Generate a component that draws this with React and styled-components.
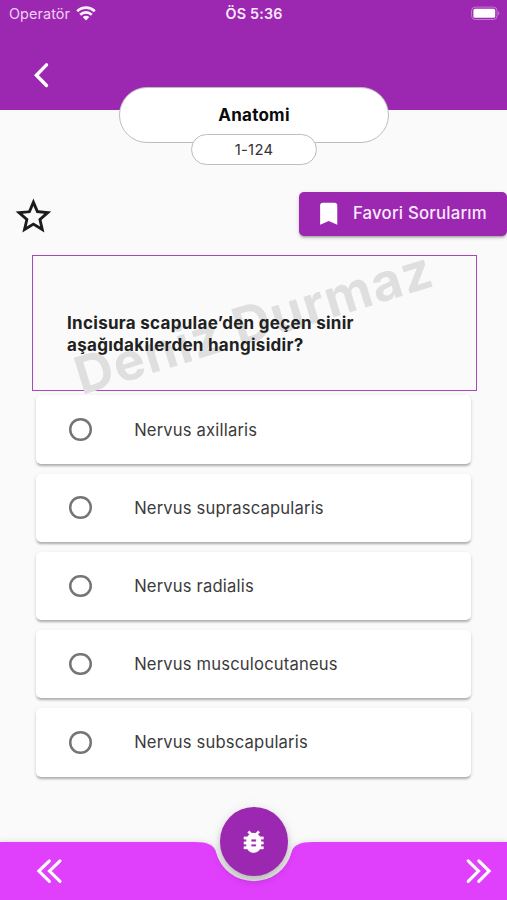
import React from "react";
import styled, { createGlobalStyle } from "styled-components";

const GlobalStyle = createGlobalStyle`
  * { box-sizing: border-box; }
  html, body { margin: 0; padding: 0; }
  body { background: #fafafa; font-family: Inter, "Liberation Sans", sans-serif; overflow: hidden; }
`;

const Screen = styled.div`
  display: flex;
  flex-direction: column;
  width: 507px;
  height: 900px;
  overflow: hidden;
  background: #fafafa;
`;

const Header = styled.header`
  flex: none;
  height: 110.3px;
  background: #9c27b0;
`;

const StatusBar = styled.div`
  display: grid;
  grid-template-columns: 1fr auto 1fr;
  align-items: center;
  height: 27px;
  padding: 0 7px 0 9px;
  color: #fbe9fd;
`;

const Carrier = styled.div`
  display: flex;
  align-items: center;
  gap: 6px;
  font-size: 14.4px;
  letter-spacing: 0.1px;
  color: #efcff4;
`;

const Clock = styled.div`
  margin-right: 1px;
  font-size: 14.3px;
  font-weight: 600;
  letter-spacing: 0.2px;
`;

const BatterySlot = styled.div`
  display: flex;
  justify-content: flex-end;
`;

const BackButton = styled.button`
  display: block;
  margin: 33px 0 0 26px;
  padding: 0;
  width: 30px;
  height: 30px;
  border: 0;
  background: none;
  svg { display: block; }
`;

const Heading = styled.div`
  display: flex;
  flex: none;
  flex-direction: column;
  align-items: center;
  margin-top: -23.3px;
  padding-left: 1px;
  z-index: 1;
`;

const Pill = styled.div`
  display: flex;
  align-items: center;
  justify-content: center;
  background: #fff;
  border: 1.2px solid #bdbdbd;
`;

const TitlePill = styled(Pill)`
  width: 270px;
  height: 56px;
  border-radius: 28px;
  font-size: 17px;
  font-weight: 700;
  letter-spacing: 0.25px;
  color: #0a0a0a;
`;

const CountPill = styled(Pill)`
  width: 126px;
  height: 31px;
  margin-top: -9px;
  border-radius: 15.5px;
  font-size: 14.8px;
  letter-spacing: 0.3px;
  color: #333;
`;

const Actions = styled.div`
  display: flex;
  flex: none;
  justify-content: space-between;
  height: 44.5px;
  margin-top: 26.5px;
  padding-left: 11.5px;
`;

const StarButton = styled.button`
  padding: 3px 0 0;
  border: 0;
  background: none;
  svg { display: block; }
`;

const FavoritesButton = styled.button`
  display: flex;
  align-items: center;
  gap: 10px;
  width: 208px;
  padding: 0 0 1px 14.5px;
  border: 0;
  border-radius: 5px;
  background: #9c27b0;
  color: #fcebfe;
  font-family: inherit;
  font-size: 16.8px;
  font-weight: 500;
  letter-spacing: 0.2px;
  white-space: nowrap;
  box-shadow: 0 3px 2px -2px rgba(0, 0, 0, 0.2), 0 2px 3px rgba(0, 0, 0, 0.14), 0 1px 5px rgba(0, 0, 0, 0.1);
`;

const QuestionBox = styled.section`
  position: relative;
  display: flex;
  flex: none;
  align-items: center;
  width: 445px;
  height: 136px;
  margin: 19px 0 0 31.5px;
  padding: 21px 35px 0 34.5px;
  border: 1.3px solid #ab47bc;
`;

const Watermark = styled.span`
  position: absolute;
  top: 50%;
  left: 50%;
  transform: translate(-50%, -50%) rotate(-17.19deg);
  font-size: 52px;
  line-height: 1;
  font-weight: 700;
  letter-spacing: 1.3px;
  color: #dfdfdf;
  white-space: nowrap;
`;

const QuestionText = styled.p`
  position: relative;
  margin: 0;
  font-size: 17px;
  line-height: 22px;
  font-weight: 700;
  letter-spacing: 0.29px;
  color: #212121;
  white-space: pre-line;
`;

const Options = styled.div`
  position: relative;
  display: flex;
  flex: none;
  flex-direction: column;
  gap: 9.8px;
  margin: 4.4px 35.7px 0 36.3px;
`;

const OptionCard = styled.label`
  display: flex;
  align-items: center;
  height: 68.4px;
  padding-left: 32.7px;
  border-radius: 5px;
  background: #fff;
  color: #3c3c3c;
  font-size: 16.6px;
  letter-spacing: 0.17px;
  box-shadow: 0 2.5px 2px -1px rgba(0, 0, 0, 0.17), 0 2px 3px rgba(0, 0, 0, 0.12), 0 1px 4px rgba(0, 0, 0, 0.07);
`;

const Radio = styled.span`
  width: 22.6px;
  height: 22.6px;
  margin-right: 42.6px;
  border-radius: 50%;
  box-shadow: inset 0 0 0 2.5px #757575;
`;

const BottomBar = styled.nav`
  position: relative;
  flex: none;
  height: 58.5px;
  margin-top: auto;
`;

const BarShape = styled.svg`
  position: absolute;
  inset: 0;
  display: block;
  overflow: visible;
  filter: drop-shadow(0 0 3px rgba(0, 0, 0, 0.12));
`;

const BarItems = styled.div`
  position: relative;
  display: flex;
  justify-content: space-between;
  height: 100%;
  padding: 14px 14px 0 34px;
`;

const BarButton = styled.button`
  padding: 0;
  width: 30px;
  height: 30px;
  border: 0;
  background: none;
  svg { display: block; }
`;

const BugButton = styled.button`
  position: absolute;
  left: 219.5px;
  top: -34.5px;
  display: flex;
  align-items: center;
  justify-content: center;
  width: 68.6px;
  height: 68.6px;
  padding: 0;
  border: 0;
  border-radius: 50%;
  background: #9c27b0;
  box-shadow: 0 4px 6px -1px rgba(0, 0, 0, 0.16), 0 5px 10px rgba(0, 0, 0, 0.1), 0 1px 14px rgba(0, 0, 0, 0.07);
`;

const WifiIcon = () => (
  <svg width="20" height="15" viewBox="0 0 20 15">
    <g fill="none" stroke="#fdf0fe" strokeWidth="2.7">
      <path d="M1.2 5.2C6.2.5 13.8.5 18.8 5.2" />
      <path d="M4.2 8.7C7.6 5.5 12.4 5.5 15.8 8.7" />
    </g>
    <path fill="#fdf0fe" d="M6.7 11.1c1.9-1.7 4.7-1.7 6.6 0L10 14.4z" />
  </svg>
);

const BatteryIcon = () => (
  <svg width="30" height="15" viewBox="0 0 30 15">
    <rect x="1.6" y="1.1" width="25.4" height="12.4" rx="3.6" fill="none" stroke="#c47bd0" />
    <rect x="3.4" y="2.8" width="21.8" height="9" rx="1.6" fill="#fff" />
    <path d="M28.2 5.2c1.5.6 1.5 3.6 0 4.2z" fill="#c47bd0" />
  </svg>
);

const BackIcon = () => (
  <svg width="30" height="30" viewBox="0 0 30 30" fill="none" stroke="#fff" strokeWidth="3.4" strokeLinecap="round">
    <path d="M20.5 4.9 10.4 15.2 20.5 25.5" />
  </svg>
);

const StarIcon = () => (
  <svg width="42.8" height="42.8" viewBox="0 0 24 24" fill="#1c1c1c">
    <path d="M22 9.24l-7.19-.62L12 2 9.19 8.63 2 9.24l5.46 4.73L5.82 21 12 17.27 18.18 21l-1.63-7.03L22 9.24zM12 15.4l-3.76 2.27 1-4.28-3.32-2.88 4.38-.38L12 6.1l1.71 4.04 4.38.38-3.32 2.88 1 4.28L12 15.4z" />
  </svg>
);

const BookmarkIcon = () => (
  <svg width="29.4" height="29.4" viewBox="0 0 24 24" fill="#fff">
    <path d="M17 3H7c-1.1 0-2 .9-2 2v16l7-3 7 3V5c0-1.1-.9-2-2-2z" />
  </svg>
);

const BugIcon = () => (
  <svg width="29.4" height="29.4" viewBox="0 0 24 24" fill="#fff" stroke="#fff" strokeWidth="0.25">
    <path d="M20 8h-2.81c-.45-.78-1.07-1.45-1.82-1.96L17 4.41 15.59 3l-2.17 2.17C12.96 5.06 12.49 5 12 5c-.49 0-.96.06-1.41.17L8.41 3 7 4.41l1.62 1.63C7.88 6.55 7.26 7.22 6.81 8H4v2h2.09c-.05.33-.09.66-.09 1v1H4v2h2v1c0 .34.04.67.09 1H4v2h2.81c1.04 1.79 2.97 3 5.19 3s4.15-1.21 5.19-3H20v-2h-2.09c.05-.33.09-.66.09-1v-1h2v-2h-2v-1c0-.34-.04-.67-.09-1H20V8zm-6 8h-4v-2h4v2zm0-4h-4v-2h4v2z" />
  </svg>
);

const DoubleLeftIcon = () => (
  <svg width="30" height="30" viewBox="0 0 30 30" fill="none" stroke="#fff" strokeWidth="3.1" strokeLinecap="round">
    <path d="M15.4 4.9 4.9 15.1 15.4 25.3M26 4.9 15.5 15.1 26 25.3" />
  </svg>
);

const DoubleRightIcon = () => (
  <svg width="30" height="30" viewBox="0 0 30 30" fill="none" stroke="#fff" strokeWidth="3.1" strokeLinecap="round">
    <path d="M5.2 4.9 15.5 15.1 5.2 25.3M15.8 4.9 26.1 15.1 15.8 25.3" />
  </svg>
);

const options = [
  "Nervus axillaris",
  "Nervus suprascapularis",
  "Nervus radialis",
  "Nervus musculocutaneus",
  "Nervus subscapularis",
];

export default function App() {
  return (
    <Screen>
      <GlobalStyle />
      <Header>
        <StatusBar>
          <Carrier>
            Operatör
            <WifiIcon />
          </Carrier>
          <Clock>ÖS 5:36</Clock>
          <BatterySlot>
            <BatteryIcon />
          </BatterySlot>
        </StatusBar>
        <BackButton aria-label="Geri">
          <BackIcon />
        </BackButton>
      </Header>
      <Heading>
        <TitlePill>Anatomi</TitlePill>
        <CountPill>1-124</CountPill>
      </Heading>
      <Actions>
        <StarButton aria-label="Favorilere ekle">
          <StarIcon />
        </StarButton>
        <FavoritesButton>
          <BookmarkIcon />
          Favori Sorularım
        </FavoritesButton>
      </Actions>
      <QuestionBox>
        <Watermark>Deniz Durmaz</Watermark>
        <QuestionText>{"Incisura scapulae’den geçen sinir\naşağıdakilerden hangisidir?"}</QuestionText>
      </QuestionBox>
      <Options>
        {options.map((option) => (
          <OptionCard key={option}>
            <Radio />
            {option}
          </OptionCard>
        ))}
      </Options>
      <BottomBar>
        <BarShape width="507" height="58.5" viewBox="0 0 507 58.5">
          <path
            fill="#e040fb"
            d="M0 0H195.1Q213.4 0 215.8 9.6A39.2 39.2 0 0 0 291.8 9.6Q294.2 0 312.5 0H507V58.5H0Z"
          />
        </BarShape>
        <BarItems>
          <BarButton aria-label="Önceki">
            <DoubleLeftIcon />
          </BarButton>
          <BarButton aria-label="Sonraki">
            <DoubleRightIcon />
          </BarButton>
        </BarItems>
        <BugButton aria-label="Hata bildir">
          <BugIcon />
        </BugButton>
      </BottomBar>
    </Screen>
  );
}
